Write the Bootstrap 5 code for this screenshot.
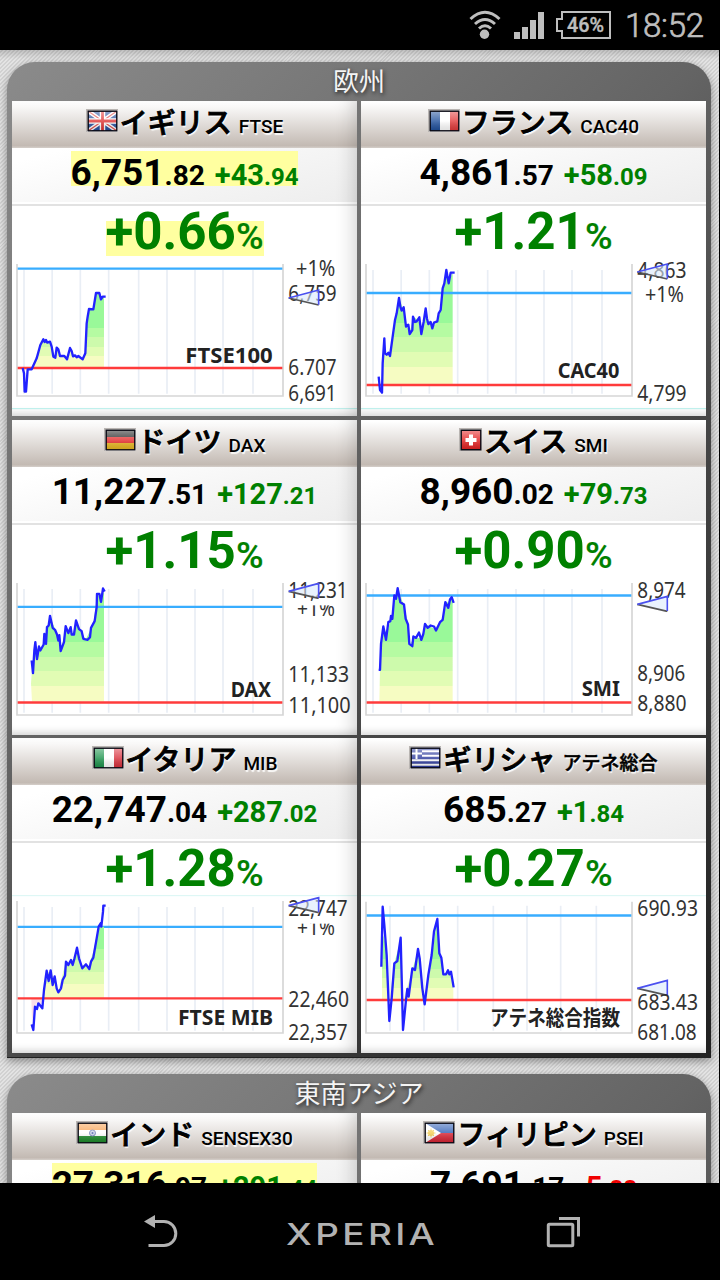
<!DOCTYPE html>
<html lang="ja">
<head>
<meta charset="utf-8">
<meta name="viewport" content="width=device-width, initial-scale=1">
<title>世界の株価</title>
<link href="https://cdn.jsdelivr.net/npm/bootstrap@5.3.0/dist/css/bootstrap.min.css" rel="stylesheet">
<style>
body{font-family:Roboto,"Noto Sans CJK JP",sans-serif;background:#000;color:#000;width:720px;height:1280px}
.statusbar{height:50px;color:#bebebe}
.clock{font-size:33px;font-weight:300;line-height:51px;width:79px;letter-spacing:-.3px;-webkit-text-stroke:.7px #bebebe}
.stage{height:1133px;width:719px;padding:12px 8px 0 7px;
 background:linear-gradient(rgba(0,0,0,.16),transparent 9px),repeating-linear-gradient(135deg,#e3e3e3 0 1.4px,#d1d1d1 1.4px 2.8px)}
.panel{width:704px;padding:0 5px 5px;border-radius:28px 28px 0 0;margin-bottom:16px;box-shadow:0 3px 8px rgba(0,0,0,.4);
 background:linear-gradient(135deg,#8b8b8b,#646464 41%,#484848 60%,#202020) 0 0/704px 995px no-repeat #202020}
.region{height:39px;line-height:41px;font-size:26px;color:#f4f4f4;text-shadow:1px 2px 4px #222}
.quotes{display:grid;grid-template-columns:345px 345px;grid-auto-rows:315px;gap:3.5px 4px}
.quote{background:#fff;position:relative;overflow:hidden}
.quote::after{content:"";position:absolute;inset:0;box-shadow:inset 0 -9px 9px -7px rgba(0,0,0,.18);pointer-events:none}
.quote:nth-child(odd)::after{box-shadow:inset 0 -9px 9px -7px rgba(0,0,0,.18),inset -16px 0 20px -14px rgba(0,0,0,.2)}
.q-name{height:47px;background:linear-gradient(#fff 3%,#c3bab3 95%,#d5cfca);line-height:45px;text-shadow:1px 2px 1px rgba(255,255,255,.9);white-space:nowrap}
.q-name b{font-size:28px;font-weight:500;-webkit-text-stroke:.9px #000}
.q-name span{font-size:19px;font-weight:500;margin-left:7px;line-height:51px}
.q-name .jp{-webkit-text-stroke:.5px #000}
.flag{width:32px;height:23px;margin:8px 2px 0 0}
.q-price{height:58px;background:linear-gradient(165deg,#fff 10%,#f6f6f6 50%,#ededed);border-bottom:2px solid #e2e2e2;box-shadow:inset 0 -2px #fff;line-height:49px;white-space:nowrap}
.q-price div{font-size:37px;font-weight:700;height:50px}
.q-price .dec{font-size:28px}
.q-price .chg{font-size:29px;margin-left:10px}
.q-price .cdec{font-size:24px}
.up{color:#008000}.down{color:#f00000}
.q-pct{height:52px;line-height:51px;font-size:51px;font-weight:700;color:#008000;white-space:nowrap}
.q-pct small{font-size:37.500px;font-weight:500;-webkit-text-stroke:.2px #008000}
.q-price .hot{background:linear-gradient(#ffffa0,#ffffa0) 0 3px/100% 35px no-repeat}
.q-pct .hot{background:linear-gradient(#ffffa0,#ffffa0) 0 15px/100% 35px no-repeat}
.chart{width:345px;height:158px}
.chart .ln{fill:none;stroke:#2222ff;stroke-width:7;stroke-linejoin:round}
.chart .avg{stroke:#38adff;stroke-width:7}.chart .base{stroke:#ff3b3b;stroke-width:7}
.chart text{font:67px "Noto Sans",sans-serif;fill:#333}
.chart .nm{font-size:63px;font-weight:700;fill:#222;text-anchor:end;font-family:"Noto Sans","Noto Sans CJK JP",sans-serif}
.navbtns{height:97px}
</style>
</head>
<body class="m-0 overflow-hidden">
<svg width="0" height="0" class="position-absolute">
 <defs>
  <linearGradient id="bands"><stop offset=".25" stop-color="#f6fcc2"/><stop offset=".25" stop-color="#e1fcb4"/><stop offset=".45" stop-color="#e1fcb4"/><stop offset=".45" stop-color="#cdfaac"/><stop offset=".65" stop-color="#cdfaac"/><stop offset=".65" stop-color="#b5fba2"/><stop offset=".85" stop-color="#b5fba2"/><stop offset=".85" stop-color="#99f999"/></linearGradient>
  <linearGradient id="g1" href="#bands" gradientUnits="userSpaceOnUse" x1="0" x2="0" y1="354" y2="212"/>
  <linearGradient id="g2" href="#bands" gradientUnits="userSpaceOnUse" x1="0" x2="0" y1="405" y2="185"/>
  <linearGradient id="g3" href="#bands" gradientUnits="userSpaceOnUse" x1="0" x2="0" y1="850" y2="632"/>
  <linearGradient id="g5" href="#bands" gradientUnits="userSpaceOnUse" x1="0" x2="0" y1="790" y2="615"/>
  <linearGradient id="g6" href="#bands" gradientUnits="userSpaceOnUse" x1="0" x2="0" y1="795" y2="650"/>
  <linearGradient id="gloss" x1="0" x2="0" y1="0" y2="1"><stop offset="0" stop-color="#fff" stop-opacity=".5"/><stop offset=".5" stop-color="#fff" stop-opacity=".2"/><stop offset="1" stop-color="#000" stop-opacity=".12"/></linearGradient>
  <symbol id="frame" viewBox="0 0 1035 474"><path d="M36 36V407M120.500 36V407M205 36V407M290 36V407M380 36V407M465 36V407M549 36V407M633 36V407M723 36V407" stroke="#e9eef5" stroke-width="5"/><path d="M15 18V414H813V18" fill="none" stroke="#d6d6d6" stroke-width="5"/></symbol>
  <symbol id="ptr" viewBox="0 0 96 52"><path d="M2 28L92 5V49Z" fill="#dbe9fb" fill-opacity=".6"/><path d="M2 28L92 49" stroke="#555" stroke-width="5"/><path d="M2 28L92 4V48" fill="none" stroke="#4a50f0" stroke-width="5"/></symbol>
  <symbol id="edge" viewBox="0 0 32 23"><path d="M0 23V0H32" fill="none" stroke="#b9b5b2" stroke-width="3"/><path d="M1 22.500H31.500V1" fill="none" stroke="#f4f2f0"/><rect x="2.200" y="2.200" width="28.600" height="19.600" fill="url(#gloss)" stroke="#0b0b14" stroke-width="1.400"/></symbol>
 </defs>
</svg>

<header class="statusbar d-flex align-items-center justify-content-end">
 <svg width="145" height="50" viewBox="472 0 145 50" class="me-2" fill="none" stroke="#bebebe">
  <path d="M474.500 19Q489 5.500 503.500 19M479 24Q489 15 499 24M483 28.500Q489 23 495 28.500" stroke-width="3"/><circle cx="488.500" cy="34.200" r="4.700" fill="#bebebe" stroke="none"/>
  <path d="M518 32h6v7h-6zM526 27h6v12h-6zM534 20h6v19h-6zM542 12h6v27h-6z" fill="#bebebe" stroke="none"/>
  <path d="M566 12H614V38H566V31H561V19H566Z" stroke-width="2"/>
  <text x="571" y="32" font-size="20.500" font-weight="500" textLength="37" lengthAdjust="spacingAndGlyphs" fill="#bebebe" stroke="#bebebe" stroke-width=".4">46%</text>
 </svg>
 <div class="clock ms-1 me-3">18:52</div>
</header>

<main class="stage overflow-hidden">
 <section class="panel">
  <h2 class="region text-center m-0 fw-normal">欧州</h2>
  <div class="quotes">

   <article class="quote">
    <div class="q-name d-flex justify-content-center"><svg class="flag" viewBox="0 0 32 23"><path fill="#244c9c" d="M2 2h29v20H2z"/><path d="M2 2L31 22M31 2L2 22" stroke="#fff" stroke-width="4"/><path d="M2 2L31 22M31 2L2 22" stroke="#e04848" stroke-width="1.200"/><path d="M16.500 2V22M2 12H31" stroke="#fff" stroke-width="5.500"/><path d="M16.500 2V22M2 12H31" stroke="#df3434" stroke-width="2.800"/><use href="#edge"/></svg><b>イギリス</b><span>FTSE</span></div>
    <div class="q-price d-flex justify-content-center"><div class="hot">6,751<span class="dec">.82</span><span class="up chg">+43<span class="cdec">.94</span></span></div></div>
    <div class="q-pct d-flex justify-content-center"><div class="hot">+0.66<small>%</small></div></div>
    <svg class="chart d-block" viewBox="0 0 1035 474"><use href="#frame"/>
     <path class="avg" d="M17 32H811"/>
     <g transform="translate(-36 -24)"><path fill="url(#g1)" d="M97 354L108 330L118 290L130 270L150 275L165 322L170 295L182 318L200 325L210 295L222 320L250 328L257 300L262 205L270 178L280 175L290 130L300 130L303 146L312 140V354Z"/><path d="M53 354H847" class="base"/><path class="ln" d="M68 354L72 370L74 425L78 425L83 358H95L110 325L121 285L130 268L134 276L138 270L142 278L150 275L155 290L160 320L166 323L170 293L175 298L180 318H193L201 328L210 294L215 303L219 319L225 316L230 322L235 318L248 328L256 310L260 220L263 200L267 177L280 178L288 129H298L303 148L308 140H317"/></g>
     <text class="nm" x="782" y="315" textLength="262" lengthAdjust="spacingAndGlyphs">FTSE100</text>
     <text x="852" y="53" textLength="118" lengthAdjust="spacingAndGlyphs">+1%</text><text x="829" y="129" textLength="145" lengthAdjust="spacingAndGlyphs">6,759</text><use href="#ptr" x="828" y="92" width="96" height="52"/>
     <text x="829" y="352" textLength="145" lengthAdjust="spacingAndGlyphs">6.707</text><text x="829" y="428" textLength="145" lengthAdjust="spacingAndGlyphs">6,691</text>
     <path d="M0 452H1035" stroke="#b8f2ee" stroke-width="3"/>
    </svg>
   </article>

   <article class="quote">
    <div class="q-name d-flex justify-content-center"><svg class="flag" viewBox="0 0 32 23"><path fill="#20509c" d="M2 2h10v20H2z"/><path fill="#fff" d="M12 2h10v20H12z"/><path fill="#e23a3a" d="M22 2h9v20h-9z"/><use href="#edge"/></svg><b>フランス</b><span>CAC40</span></div>
    <div class="q-price d-flex justify-content-center"><div>4,861<span class="dec">.57</span><span class="up chg">+58<span class="cdec">.09</span></span></div></div>
    <div class="q-pct d-flex justify-content-center"><div>+1.21<small>%</small></div></div>
    <svg class="chart d-block" viewBox="0 0 1035 474"><use href="#frame"/>
     <g transform="translate(-3 -24)"><path fill="url(#g2)" d="M68 405L72 270L80 310L92 312L100 250L118 145L130 180L138 225L150 245L160 200L175 210L184 250L196 180L205 220L225 225L240 190L250 110L260 60L266 95L278 68V405Z"/></g>
     <path class="avg" d="M17 105H811"/>
     <g transform="translate(-3 -24)"><path d="M20 405H814" class="base"/><path class="ln" d="M56 380L60 420L66 428L68 340L73 265L75 310L80 314L85 308L90 318L98 260L105 210L110 190L117 144L121 170L125 182L131 172L138 230L145 224L149 252L157 240L159 200L165 216L170 214L178 202L184 252L191 215L197 175L201 206L205 222L212 216L217 235L222 218L232 214L236 190L242 180L248 115L253 100L259 60L266 100L272 68H284"/></g>
     <text class="nm" x="775" y="361" textLength="185" lengthAdjust="spacingAndGlyphs">CAC40</text>
     <text x="829" y="61" textLength="148" lengthAdjust="spacingAndGlyphs">4,863</text><use href="#ptr" x="827" y="14" width="96" height="52"/>
     <text x="852" y="131" textLength="117" lengthAdjust="spacingAndGlyphs">+1%</text><text x="829" y="428" textLength="148" lengthAdjust="spacingAndGlyphs">4,799</text>
     <path d="M0 452H1035" stroke="#b8f2ee" stroke-width="3"/>
    </svg>
   </article>

   <article class="quote">
    <div class="q-name d-flex justify-content-center"><svg class="flag" viewBox="0 0 32 23"><path fill="#222" d="M2 2h29v7H2z"/><path fill="#e52a2a" d="M2 9h29v6H2z"/><path fill="#e8b820" d="M2 15h29v7H2z"/><use href="#edge"/></svg><b>ドイツ</b><span>DAX</span></div>
    <div class="q-price d-flex justify-content-center"><div>11,227<span class="dec">.51</span><span class="up chg">+127<span class="cdec">.21</span></span></div></div>
    <div class="q-pct d-flex justify-content-center"><div>+1.15<small>%</small></div></div>
    <svg class="chart d-block" viewBox="0 0 1035 474"><use href="#frame"/>
     <g transform="translate(-36 -469.500)"><path fill="url(#g3)" d="M96 843L93 790L97 730L106 670L113 700L130 670L150 590L165 625L183 690L197 620L218 640L230 605L257 658L280 610L292 520L303 540L312 510V843Z"/></g>
     <path class="avg" d="M17 89.500H811"/>
     <g transform="translate(-36 -469.500)"><path d="M53 846H847" class="base"/><path class="ln" d="M95 720L99 758L103 690L106 665L111 716L117 678L121 690L131 672L133 640L138 670L141 620L146 615L150 586L158 622L165 628L171 642L175 660L178 644L182 692L192 665L197 617L205 638L212 620L215 642L222 642L228 600L237 626L245 632L250 655L263 658L270 650L273 622L284 602L290 560L291 520L298 520L303 544L309 504L314 513"/></g>
     <text class="nm" x="777" y="361" textLength="121" lengthAdjust="spacingAndGlyphs">DAX</text>
     <text x="855" y="117" textLength="114" lengthAdjust="spacingAndGlyphs">+1%</text><rect x="848" y="62" width="130" height="23" fill="#fff"/><text x="829" y="63" textLength="178" lengthAdjust="spacingAndGlyphs">11,231</text><use href="#ptr" x="828" y="15" width="96" height="52"/>
     <text x="829" y="316" textLength="182" lengthAdjust="spacingAndGlyphs">11,133</text><text x="829" y="407" textLength="187" lengthAdjust="spacingAndGlyphs">11,100</text>
    </svg>
   </article>

   <article class="quote">
    <div class="q-name d-flex justify-content-center"><svg class="flag" style="width:23px" viewBox="0 0 23 23"><path fill="#e32020" d="M2 2h20v20H2z"/><path fill="url(#gloss)" d="M2 2h20v20H2z"/><path d="M12 6.500V17.500M6.500 12H17.500" stroke="#fff" stroke-width="4"/><path d="M0 23V0H23" fill="none" stroke="#b9b5b2" stroke-width="3"/><path d="M2.200 2.200h19.600v19.600H2.200z" fill="none" stroke="#0b0b14" stroke-width="1.400"/></svg><b>スイス</b><span>SMI</span></div>
    <div class="q-price d-flex justify-content-center"><div>8,960<span class="dec">.02</span><span class="up chg">+79<span class="cdec">.73</span></span></div></div>
    <div class="q-pct d-flex justify-content-center"><div>+0.90<small>%</small></div></div>
    <svg class="chart d-block" viewBox="0 0 1035 474"><use href="#frame"/>
     <g transform="translate(-3 -469.500)"><path fill="url(#g3)" d="M58 843L60 745L70 620L80 640L95 590L105 530L113 505L130 550L145 610L150 670L165 650L185 655L195 610L228 628L248 590L262 545L278 535V843Z"/></g>
     <path class="avg" d="M17 55.500H811"/>
     <g transform="translate(-3 -469.500)"><path d="M20 846H814" class="base"/><path class="ln" d="M56 748H60L63 670L70 618L78 658L85 605L91 602L93 586L97 595L103 525L108 535L113 503L121 545L132 552L137 595L144 612L148 670L157 677L160 648L168 652L177 636L184 658L190 640L195 610L203 622L212 615L222 618L228 630L240 605L248 598L256 545L265 562L270 537L275 530L281 547"/></g>
     <text class="nm" x="777" y="357" textLength="115" lengthAdjust="spacingAndGlyphs">SMI</text>
     <text x="829" y="63" textLength="145" lengthAdjust="spacingAndGlyphs">8,974</text><use href="#ptr" x="827" y="54" width="96" height="52"/>
     <text x="829" y="312" textLength="144" lengthAdjust="spacingAndGlyphs">8,906</text><text x="829" y="402" textLength="148" lengthAdjust="spacingAndGlyphs">8,880</text>
    </svg>
   </article>

   <article class="quote">
    <div class="q-name d-flex justify-content-center"><svg class="flag" viewBox="0 0 32 23"><path fill="#1c934c" d="M2 2h10v20H2z"/><path fill="#fff" d="M12 2h10v20H12z"/><path fill="#d8303c" d="M22 2h9v20h-9z"/><use href="#edge"/></svg><b>イタリア</b><span>MIB</span></div>
    <div class="q-price d-flex justify-content-center"><div>22,747<span class="dec">.04</span><span class="up chg">+287<span class="cdec">.02</span></span></div></div>
    <div class="q-pct d-flex justify-content-center"><div>+1.28<small>%</small></div></div>
    <svg class="chart d-block" viewBox="0 0 1035 474"><path d="M0 2H1035" stroke="#d8f6f4" stroke-width="3"/><use href="#frame"/>
     <path class="avg" d="M17 95.500H811"/>
     <g transform="translate(-36 -480)"><path fill="#fbdde8" d="M94 790H128L122 810L108 805L96 860Z"/><path fill="url(#g5)" d="M130 790L140 710L155 715L175 768L195 690L215 680L232 645L245 690L265 695L280 650L295 575L312 575V790Z"/><path d="M53 790H847" class="base"/><path class="ln" d="M95 868L100 885L105 815L111 822L115 805L127 820L132 765L140 707L146 738L152 706L158 750L164 724L170 760L175 772L183 760L188 735L195 722L198 680L205 690L213 675L218 690L223 672L231 638L237 670L247 700L258 688L268 702L273 680L280 668L290 610L296 575L302 565L304 575L309 530L310 512H317"/></g>
     <text class="nm" x="783" y="390" textLength="285" lengthAdjust="spacingAndGlyphs">FTSE MIB</text>
     <text x="855" y="121" textLength="114" lengthAdjust="spacingAndGlyphs">+1%</text><rect x="848" y="64" width="130" height="22" fill="#fff"/><text x="829" y="64" textLength="178" lengthAdjust="spacingAndGlyphs">22,747</text><use href="#ptr" x="828" y="4" width="96" height="52"/>
     <text x="829" y="335" textLength="182" lengthAdjust="spacingAndGlyphs">22,460</text><text x="829" y="435" textLength="178" lengthAdjust="spacingAndGlyphs">22,357</text>
    </svg>
   </article>

   <article class="quote">
    <div class="q-name d-flex justify-content-center"><svg class="flag" viewBox="0 0 32 23"><path fill="#fff" d="M2 2h29v20H2z"/><path d="M2 3H31M2 7.500H31M2 12H31M2 16.500H31M2 21H31" stroke="#2c3a9c" stroke-width="2.300"/><path fill="#2c3a9c" d="M2 2h11v11H2z"/><path d="M7.500 2V13M2 7.500H13" stroke="#fff" stroke-width="2"/><use href="#edge"/></svg><b>ギリシャ</b><span class="jp">アテネ総合</span></div>
    <div class="q-price d-flex justify-content-center"><div>685<span class="dec">.27</span><span class="up chg">+1<span class="cdec">.84</span></span></div></div>
    <div class="q-pct d-flex justify-content-center"><div>+0.27<small>%</small></div></div>
    <svg class="chart d-block" viewBox="0 0 1035 474"><path d="M0 2H1035" stroke="#d8f6f4" stroke-width="3"/>
     <path d="M87 32V407M189 32V407M290 32V407M397 32V407M498 32V407M599 32V407M706 32V407" stroke="#e9eef5" stroke-width="5"/><path d="M15 20V414H813V20" fill="none" stroke="#d6d6d6" stroke-width="5"/>
     <path class="avg" d="M17 61.500H811"/>
     <g transform="translate(-3 -480)"><path fill="url(#g6)" d="M66 795V690L70 600L80 640L88 795L103 685L122 615L130 795L157 705L174 645L195 795L215 670L231 555L240 660L252 715L270 710L280 755V795Z"/><path d="M20 795H814" class="base"/><path class="ln" d="M64 695L68 515L73 570L80 660L88 858L95 790L103 685L112 678L122 608L129 885L138 795L142 762L146 785L157 700L165 705L174 642L179 670L187 760L194 808L205 720L215 660L222 590L232 552L238 655L244 668L250 718L258 718L264 706L268 718L273 710L281 757"/></g>
     <text class="nm" x="777" y="389" textLength="390" lengthAdjust="spacingAndGlyphs">アテネ総合指数</text>
     <text x="829" y="64" textLength="182" lengthAdjust="spacingAndGlyphs">690.93</text><use href="#ptr" x="827" y="252" width="96" height="52"/>
     <text x="829" y="345" textLength="182" lengthAdjust="spacingAndGlyphs">683.43</text><text x="829" y="435" textLength="178" lengthAdjust="spacingAndGlyphs">681.08</text>
    </svg>
   </article>
  </div>
 </section>

 <section class="panel">
  <h2 class="region text-center m-0 fw-normal">東南アジア</h2>
  <div class="quotes">
   <article class="quote">
    <div class="q-name d-flex justify-content-center"><svg class="flag" viewBox="0 0 32 23"><path fill="#f8a050" d="M2 2h29v7H2z"/><path fill="#fff" d="M2 9h29v6H2z"/><path fill="#1d8a2a" d="M2 15h29v7H2z"/><circle cx="16.500" cy="12" r="3" fill="#c8d0e8" stroke="#6c7cb8"/><circle cx="16.500" cy="12" r="1" fill="#4c5ca8"/><use href="#edge"/></svg><b>インド</b><span>SENSEX30</span></div>
    <div class="q-price d-flex justify-content-center"><div class="hot">27,316<span class="dec">.97</span><span class="up chg">+291<span class="cdec">.44</span></span></div></div>
   </article>
   <article class="quote">
    <div class="q-name d-flex justify-content-center"><svg class="flag" viewBox="0 0 32 23"><path fill="#2c5cb4" d="M2 2h29v10H2z"/><path fill="#d82434" d="M2 12h29v10H2z"/><path fill="#fff" d="M2 2L18 12L2 22z"/><circle cx="8" cy="12" r="3" fill="#f2cc50"/><path d="M8 7.500V16.500M3.500 12H12.500M5 9L11 15M11 9L5 15" stroke="#f2cc50"/><use href="#edge"/></svg><b>フィリピン</b><span>PSEI</span></div>
    <div class="q-price d-flex justify-content-center"><div>7,691<span class="dec">.17</span><span class="down chg">-5<span class="cdec">.88</span></span></div></div>
   </article>
  </div>
 </section>
</main>

<footer class="navbtns">
 <svg class="d-block" width="720" height="97" viewBox="0 1183 720 97" fill="none" stroke="#b2b2b2">
  <path d="M152 1221.500H164A11.800 12 0 0 1 164 1245.500H148.500" stroke-width="3"/><path d="M144 1221.500L155 1215V1228Z" fill="#b2b2b2" stroke="none"/>
  <text transform="translate(286 1244.500) scale(1.25 1)" font-family="Inter" font-size="29.500" font-weight="500" textLength="119" lengthAdjust="spacing" fill="#b2b2b2" stroke="none">XPERIA</text>
  <rect x="548.300" y="1224.300" width="24.500" height="21.500" rx="1" stroke-width="3"/><path d="M559 1218.500H578.500V1236.500" stroke-width="3"/>
 </svg>
</footer>
<script src="https://cdn.jsdelivr.net/npm/bootstrap@5.3.0/dist/js/bootstrap.bundle.min.js"></script>
</body>
</html>
